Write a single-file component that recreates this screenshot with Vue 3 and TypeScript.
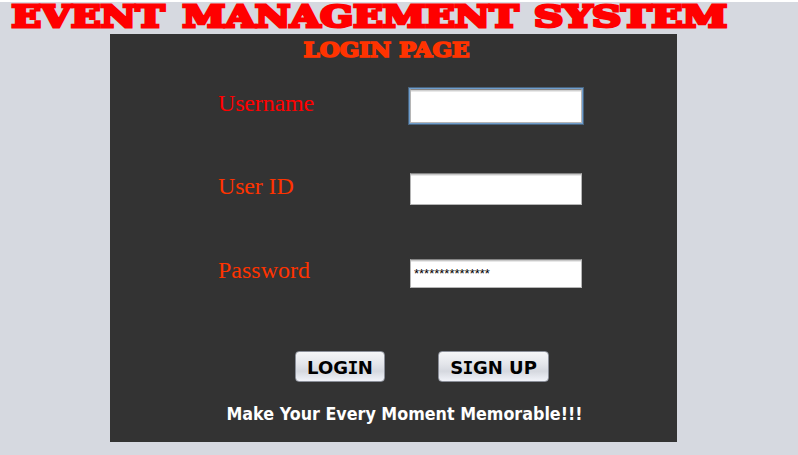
<script setup lang="ts">
import { ref } from 'vue'

interface TitleWord {
  text: string
  x: number
  width: number
}

const title: TitleWord[] = [
  { text: 'EVENT', x: 11.5, width: 153 },
  { text: 'MANAGEMENT', x: 182.5, width: 336 },
  { text: 'SYSTEM', x: 534, width: 193 },
]

const username = ref('')
const userId = ref('')
const password = ref('***************')
</script>

<template>
  <main class="page">
    <svg class="title" width="798" height="26" viewBox="0 2 798 26" role="heading" aria-level="1">
      <text
        v-for="word in title"
        :key="word.text"
        :x="word.x"
        y="26.5"
        :textLength="word.width"
        lengthAdjust="spacingAndGlyphs"
      >{{ word.text }}</text>
    </svg>

    <form class="panel" @submit.prevent>
      <svg class="subtitle" width="567" height="30" role="heading" aria-level="2">
        <text x="193.5" y="22.7" textLength="166" lengthAdjust="spacingAndGlyphs">LOGIN PAGE</text>
      </svg>

      <div class="fields">
        <label class="name first" for="username">Username</label>
        <input id="username" v-model="username" class="field active" type="text" />
        <label class="name" for="userid">User ID</label>
        <input id="userid" v-model="userId" class="field" type="text" />
        <label class="name last" for="password">Password</label>
        <input id="password" v-model="password" class="field short" type="text" />
      </div>

      <div class="actions">
        <button class="login" type="submit">LOG<span class="slab">I</span>N</button>
        <button class="signup" type="button">S<span class="slab">I</span>GN UP</button>
      </div>

      <svg class="tagline" width="567" height="30">
        <text x="116.5" y="20" textLength="356" lengthAdjust="spacingAndGlyphs">Make Your Every Moment Memorable!!!</text>
      </svg>
    </form>
  </main>
</template>

<style>
body {
  margin: 0;
  background: #d6d9e0;
}
</style>

<style scoped>
.page {
  box-sizing: border-box;
  width: 798px;
  height: 455px;
  border-top: 2px solid #fff;
  background: #d6d9e0;
}
svg {
  display: block;
  overflow: visible;
}
.title text {
  font: bold 30px "DejaVu Serif", serif;
  fill: #f00;
  stroke: #f00;
  stroke-width: 3px;
}
.panel {
  width: 567px;
  height: 408px;
  margin: 6px 0 0 110px;
  background: #333;
}
.subtitle text {
  font: bold 19.5px "DejaVu Serif", serif;
  fill: #ff3300;
  stroke: #ff3300;
  stroke-width: 1.6px;
}
.fields {
  display: grid;
  grid-template-columns: 192px 172px;
  grid-template-rows: 84px 86px 82px;
  padding: 24px 0 0 108px;
}
.name {
  font: 24px/28px "Liberation Serif", serif;
  letter-spacing: -0.15px;
  color: #ff3300;
}
.name.first {
  padding-top: 1px;
  color: #f00;
}
.name.last {
  margin-top: -2px;
  letter-spacing: 0;
}
.field {
  box-sizing: border-box;
  width: 172px;
  height: 32px;
  margin: 1px 0 0;
  padding: 0 3px 1px;
  border: 1px solid #b5b5b5;
  border-top-color: #858585;
  border-radius: 0;
  outline: none;
  background: #fff;
  box-shadow: inset 0 1px #c8c8c8, inset 0 2px #e8e8e8;
  font: 13px "Liberation Sans", sans-serif;
  color: #000;
}
.field.active {
  height: 34px;
  box-shadow: 0 0 0 1px #6f9dcc, 0 0 0 2px #49647e, inset 0 1px #d0d0d0, inset 0 2px #e8e8e8;
}
.field.short {
  height: 29px;
  padding: 0 3px 1px;
}
.actions {
  display: flex;
  gap: 53px;
  padding: 11px 0 0 185px;
}
.actions button {
  box-sizing: border-box;
  height: 31px;
  padding: 2px 0 0;
  border: 1px solid #8a8e98;
  border-radius: 4px;
  background: linear-gradient(#f5f6f8 0%, #e4e6eb 40%, #d5d8df 66%, #f1f3f9 100%);
  font: bold 18px "DejaVu Sans", sans-serif;
  color: #000;
  white-space: nowrap;
}
.login {
  width: 90px;
}
.signup {
  width: 111px;
}
.slab {
  font-family: "DejaVu Sans Mono", monospace;
  margin: 0 -0.5px;
}
.tagline {
  margin-top: 18px;
}
.tagline text {
  font: bold 17.5px "DejaVu Sans", sans-serif;
  fill: #fff;
}
</style>
